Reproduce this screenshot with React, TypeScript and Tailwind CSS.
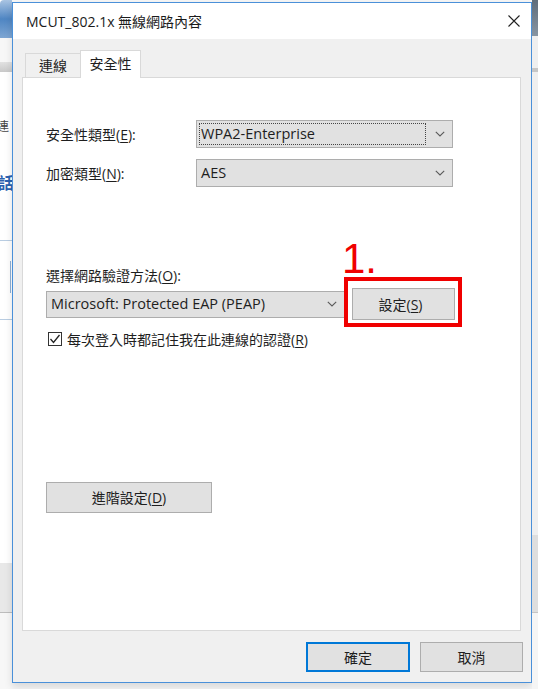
import React from "react";

const font = "font-['Open_Sans','Noto_Sans_CJK_TC',sans-serif]";

function Chevron() {
  return (
    <svg width="10" height="6" viewBox="0 0 10 6" className="shrink-0">
      <polyline points="0.8,0.8 5,5 9.2,0.8" fill="none" stroke="#5a5a5a" strokeWidth="1.1" />
    </svg>
  );
}

function Select({ text, w, focused }: { text: string; w: string; focused?: boolean }) {
  return (
    <div className={`${w} h-full flex items-stretch bg-[#e1e1e1] border border-[#adadad]`}>
      <div className="flex-1 flex p-[2px]">
        <div
          className={`flex-1 flex items-center pl-[1px] text-[14.5px] text-[#1e1e1e] ${
            focused ? "border border-dotted border-[#444]" : "border border-transparent"
          }`}
        >
          {text}
        </div>
      </div>
      <div className="w-[24px] flex items-center justify-center">
        <Chevron />
      </div>
    </div>
  );
}

function Key({ k }: { k: string }) {
  return (
    <>
      (<span className="underline underline-offset-2">{k}</span>)
    </>
  );
}

export default function App() {
  return (
    <div className={`w-[538px] h-[689px] flex overflow-hidden bg-[#f6f6f6] ${font}`}>
      {/* background window, left */}
      <div className="w-[12px] shrink-0 flex flex-col bg-white">
        <div className="h-[38px] bg-gradient-to-b from-[#a9c4e2] via-[#4f86c3] to-[#7ea6d3] rounded-tl-[4px]" />
        <div className="h-[24px] bg-[#f7f7f7]" />
        <div className="h-[10px] bg-gradient-to-b from-[#e2e2e2] to-[#c9c9c9]" />
        <div className="h-[48px]" />
        <div className="h-[14px] text-[12px] leading-[14px] text-[#444] -ml-[3px] overflow-hidden">連</div>
        <div className="h-[39px]" />
        <div className="h-[20px] text-[16px] leading-[20px] text-[#2a62b0] font-bold -ml-[2px] overflow-hidden">話</div>
        <div className="h-[47px]" />
        <div className="h-px bg-[#b9cde2]" />
        <div className="h-[20px]" />
        <div className="h-[32px] ml-[10px] w-[1px] bg-[#8fb0d6]" />
        <div className="h-[26px]" />
        <div className="h-px bg-[#b9cde2]" />
        <div className="h-[243px]" />
        <div className="h-[49px] bg-[#e8e8e8]" />
        <div className="h-px bg-[#bdbdbd]" />
        <div className="flex-1 bg-[#f7f7f7]" />
      </div>

      {/* dialog */}
      <div className="w-[520px] h-[681px] mt-[2px] shrink-0 flex flex-col border border-[#4a90d9] bg-[#f0f0f0] shadow-[0_4px_8px_rgba(0,0,0,0.12)]">
        <div className="h-[36px] bg-white flex items-center justify-between pl-[13px] pr-[11px]">
          <span className="text-[14px] text-[#1b1b1b]">MCUT_802.1x 無線網路內容</span>
          <svg width="12" height="12" viewBox="0 0 12 12">
            <path d="M0.5 0.5 L11.5 11.5 M11.5 0.5 L0.5 11.5" stroke="#222" strokeWidth="1.1" />
          </svg>
        </div>

        <div className="flex-1 flex flex-col pt-[11px]">
          {/* tabs */}
          <div className="h-[27px] ml-[12px] flex items-end">
            <div className="w-[55px] h-[24px] border-t border-l border-[#d9d9d9] bg-[#f0f0f0] flex items-center justify-center text-[14px] text-[#1e1e1e]">
              連線
            </div>
            <div className="relative z-10 w-[61px] h-[28px] -mb-px border-t border-x border-[#d9d9d9] bg-white flex items-center justify-center pb-[2px] text-[14px] text-[#1e1e1e]">
              安全性
            </div>
          </div>

          {/* panel */}
          <div className="ml-[9px] w-[499px] h-[554px] bg-white border border-[#d9d9d9] flex flex-col px-[23px] pt-[42px] text-[14px] text-[#1e1e1e]">
            <div className="h-[28px] flex items-center">
              <div className="w-[150px]">
                安全性類型<Key k="E" />:
              </div>
              <Select text="WPA2-Enterprise" w="w-[257px]" focused />
            </div>
            <div className="h-[28px] mt-[11px] flex items-center">
              <div className="w-[150px]">
                加密類型<Key k="N" />:
              </div>
              <Select text="AES" w="w-[257px]" />
            </div>

            <div className="h-[20px] leading-[20px] mt-[79px]">
              選擇網路驗證方法<Key k="O" />:
            </div>
            <div className="h-[32px] mt-[2px] flex items-center gap-[7px]">
              <div className="h-[27px] flex">
                <Select text="Microsoft: Protected EAP (PEAP)" w="w-[299px]" />
              </div>
              <div className="relative">
                <button className="w-[103px] h-[32px] bg-[#e1e1e1] border border-[#adadad] text-[14px] text-[#1e1e1e] pr-[6px]">
                  設定<Key k="S" />
                </button>
                {/* annotation */}
                <div className="absolute -left-[8px] -right-[7px] -top-[11px] -bottom-[7px] border-[4px] border-[#f00000]" />
                <div className="absolute -left-[10px] -top-[50px] text-[42px] leading-[42px] text-[#f00000] font-['Liberation_Sans',sans-serif]">
                  1.
                </div>
              </div>
            </div>

            <div className="h-[20px] mt-[9px] flex items-center">
              <svg width="14" height="14" viewBox="0 0 14 14" className="ml-[2px] shrink-0">
                <rect x="0.5" y="0.5" width="13" height="13" fill="white" stroke="#333" />
                <polyline points="2.5,7 5.5,10.5 11.5,3" fill="none" stroke="#222" strokeWidth="1.3" />
              </svg>
              <span className="ml-[5px]">
                每次登入時都記住我在此連線的認證<Key k="R" />
              </span>
            </div>

            <button className="mt-[133px] w-[166px] h-[31px] bg-[#e1e1e1] border border-[#adadad] text-[14px] text-[#1e1e1e]">
              進階設定<Key k="D" />
            </button>
          </div>

          {/* dialog buttons */}
          <div className="mt-[11px] mr-[8px] flex justify-end gap-[10px]">
            <button className="w-[104px] h-[30px] bg-[#e1e1e1] border-2 border-[#0078d7] text-[14px] text-[#1e1e1e]">
              確定
            </button>
            <button className="w-[103px] h-[30px] bg-[#e1e1e1] border border-[#adadad] text-[14px] text-[#1e1e1e]">
              取消
            </button>
          </div>
        </div>
      </div>

      {/* background window, right */}
      <div className="flex-1 flex flex-col bg-[#efefef]">
        <div className="h-[36px] bg-gradient-to-b from-[#5f6d7b] to-[#8895a2]" />
        <div className="h-[32px]" />
        <div className="h-[4px] bg-[#c6c6c6]" />
        <div className="h-[463px]" />
        <div className="h-[77px] bg-[#dedede]" />
        <div className="h-px bg-[#c4c4c4]" />
        <div className="flex-1 bg-[#f5f5f5]" />
      </div>
    </div>
  );
}
